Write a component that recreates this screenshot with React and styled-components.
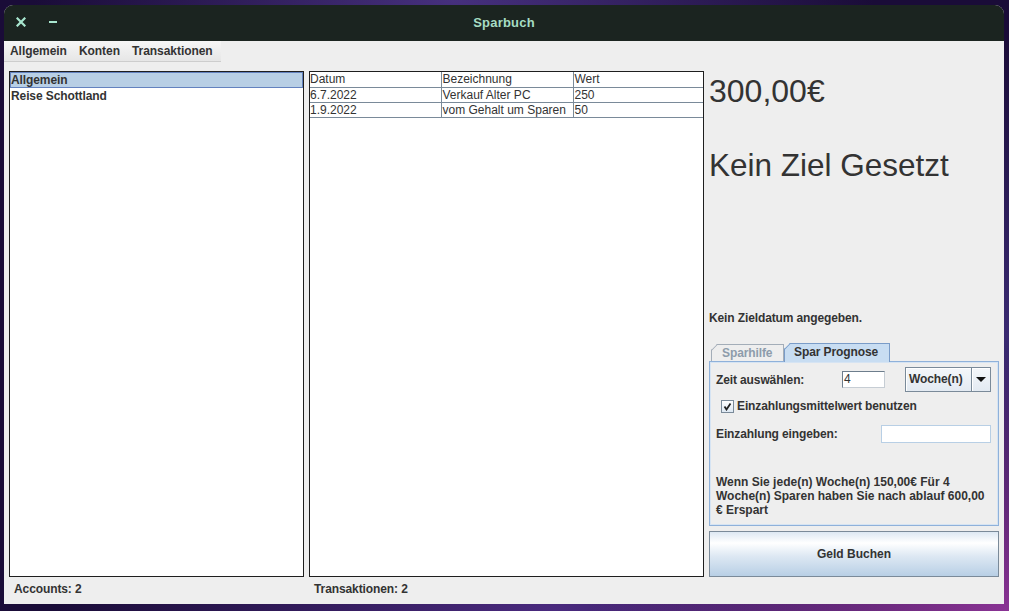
import React from "react";
import styled, { createGlobalStyle } from "styled-components";

const Global = createGlobalStyle`
  html, body { margin: 0; padding: 0; }
  body {
    font-family: "Liberation Sans", Arial, sans-serif;
    overflow: hidden;
  }
  * { box-sizing: border-box; }
`;

const Desktop = styled.div`
  width: 1009px;
  height: 611px;
  padding: 5px 5px 7px 4px;
  background:
    radial-gradient(ellipse 420px 260px at 100% 100%, #8a3394 0%, rgba(138,51,148,0) 100%),
    radial-gradient(ellipse 500px 200px at 55% 100%, #4a2a7e 0%, rgba(74,42,126,0) 100%),
    radial-gradient(ellipse 420px 160px at 45% 0%, #46307e 0%, rgba(70,48,126,0) 100%),
    radial-gradient(ellipse 200px 300px at 100% 55%, #3a2a72 0%, rgba(58,42,114,0) 100%),
    #1a0c38;
`;

const Window = styled.div`
  width: 1000px;
  height: 599px;
  display: flex;
  flex-direction: column;
  border-radius: 9px 9px 0 0;
  overflow: hidden;
  background: #eeeeee;
`;

const TitleBar = styled.div`
  height: 36px;
  flex: none;
  padding-bottom: 2px;
  background: #1b2420;
  display: grid;
  grid-template-columns: 1fr auto 1fr;
  align-items: center;
`;

const Controls = styled.div`
  display: flex;
  align-items: center;
  gap: 16px;
  padding-left: 9px;
`;

const Ctl = styled.span`
  width: 16px;
  height: 16px;
  display: flex;
  align-items: center;
  justify-content: center;
`;

const Title = styled.div`
  font-weight: bold;
  font-size: 13px;
  color: #a6dcc3;
  letter-spacing: 0.2px;
`;

const MenuBar = styled.div`
  flex: none;
  width: 217px;
  height: 21px;
  display: flex;
  align-items: center;
  background: linear-gradient(#f6f6f6, #e6e6e6);
  border-bottom: 1px solid #cdcdcd;
`;

const MenuItem = styled.span`
  padding: 0 6px;
  font-size: 12px;
  font-weight: bold;
  color: #333333;
  line-height: 20px;
  letter-spacing: -0.05px;
`;

const Main = styled.div`
  flex: none;
  height: 515px;
  padding: 9px 5px 0 5px;
  display: grid;
  grid-template-columns: 295px 395px 290px;
  column-gap: 5px;
`;

const ListBox = styled.div`
  background: #ffffff;
  border: 1px solid #1e1e1e;
  display: flex;
  flex-direction: column;
`;

const ListRow = styled.div`
  height: 16px;
  line-height: 14px;
  padding-left: 0;
  font-size: 12px;
  font-weight: bold;
  letter-spacing: -0.1px;
  color: #333333;
  background: ${(p) => (p.$selected ? "#b8cfe5" : "transparent")};
  border: 1px solid ${(p) => (p.$selected ? "#6382bf" : "transparent")};
`;

const TableBox = styled.div`
  background: #ffffff;
  border: 1px solid #1e1e1e;
`;

const Table = styled.table`
  border-collapse: collapse;
  width: 100%;
  table-layout: fixed;
`;

const Td = styled.td`
  height: 15px;
  padding: 0 1px;
  font-size: 12px;
  line-height: 14px;
  color: #333333;
  border-right: 1px solid #7a8a99;
  border-bottom: 1px solid #7a8a99;
  white-space: nowrap;
  overflow: hidden;
  &:first-child { padding-left: 0; }
  &:last-child { border-right: none; }
`;

const Right = styled.div`
  display: flex;
  flex-direction: column;
`;

const BigText = styled.div`
  font-size: ${(p) => p.$size}px;
  line-height: 36px;
  color: #333333;
  margin-top: ${(p) => p.$mt}px;
  white-space: nowrap;
`;

const Spacer = styled.div`
  flex: 1;
`;

const Note = styled.div`
  font-size: 12px;
  font-weight: bold;
  line-height: 14px;
  letter-spacing: -0.12px;
  color: #333333;
  margin-bottom: 18px;
`;

const TabStrip = styled.div`
  height: 18px;
  display: flex;
  align-items: flex-end;
  padding-left: 2px;
  position: relative;
  z-index: 1;
`;

const Tab = styled.div`
  position: relative;
  height: ${(p) => (p.$active ? 19 : 17)}px;
  margin-bottom: ${(p) => (p.$active ? -1 : 0)}px;
  width: ${(p) => p.$w}px;
  padding-left: ${(p) => p.$pl}px;
  font-size: 12px;
  font-weight: bold;
  letter-spacing: -0.1px;
  line-height: 17px;
  color: ${(p) => (p.$active ? "#333333" : "#8d9cab")};
  background: ${(p) => (p.$active ? "#c8ddf2" : "#eeeeee")};
  border-top: 1px solid ${(p) => (p.$active ? "#7a9cc8" : "#a3adb8")};
  border-right: 1px solid ${(p) => (p.$active ? "#7a9cc8" : "#a3adb8")};
  border-left: 1px solid ${(p) => (p.$active ? "#7a9cc8" : "#a3adb8")};
  clip-path: polygon(6px 0, 100% 0, 100% 100%, 0 100%, 0 6px);
  &::before {
    content: "";
    position: absolute;
    left: -1px;
    top: 5px;
    width: 9px;
    height: 1px;
    background: ${(p) => (p.$active ? "#7a9cc8" : "#a3adb8")};
    transform: rotate(-45deg);
    transform-origin: 0 0;
  }
`;

const Panel = styled.div`
  height: 165px;
  border: 1px solid #8fb1da;
  box-shadow: inset 0 0 0 1px #d6e4f3;
  padding: 5px 7px 0 6px;
  display: flex;
  flex-direction: column;
`;

const Row = styled.div`
  display: flex;
  align-items: center;
  height: ${(p) => p.$h}px;
  margin-top: ${(p) => p.$mt || 0}px;
`;

const Label = styled.span`
  font-size: 12px;
  font-weight: bold;
  letter-spacing: -0.12px;
  color: #333333;
  width: ${(p) => (p.$w ? `${p.$w}px` : "auto")};
  flex: none;
  white-space: nowrap;
`;

const Field = styled.div`
  width: ${(p) => p.$w}px;
  height: ${(p) => p.$h}px;
  background: #ffffff;
  border: 1px solid ${(p) => (p.$light ? "#b8cfe5" : "#c6cdd4")};
  border-top-color: ${(p) => (p.$light ? "#b8cfe5" : "#6d7d8c")};
  border-left-color: ${(p) => (p.$light ? "#b8cfe5" : "#6d7d8c")};
  font-size: 12px;
  line-height: 15px;
  color: #333333;
  padding-left: 1px;
`;

const Combo = styled.div`
  margin-left: ${(p) => p.$ml}px;
  width: 86px;
  height: 25px;
  border: 1px solid #7a8a99;
  display: flex;
  background: linear-gradient(#f4f7fa, #e3eaf2);
`;

const ComboText = styled.div`
  flex: 1;
  font-size: 12px;
  font-weight: bold;
  letter-spacing: -0.1px;
  color: #333333;
  line-height: 23px;
  padding-left: 3px;
  border-right: 1px solid #7a8a99;
  box-shadow: inset 1px 1px 0 #ffffff;
`;

const ComboBtn = styled.div`
  width: 18px;
  display: flex;
  align-items: center;
  justify-content: center;
  box-shadow: inset 1px 1px 0 #ffffff;
`;

const Check = styled.div`
  width: 13px;
  height: 13px;
  margin-left: 5px;
  margin-right: 3px;
  border: 1px solid #7a8a99;
  background: linear-gradient(#ffffff, #dde8f3);
  display: flex;
  align-items: center;
  justify-content: center;
`;

const Paragraph = styled.div`
  margin-top: 32px;
  font-size: 12px;
  font-weight: bold;
  line-height: 14px;
  color: #333333;
  white-space: nowrap;
`;

const Button = styled.div`
  margin-top: 5px;
  height: 46px;
  border: 1px solid #7a8a99;
  background: linear-gradient(#dde8f3 0%, #ffffff 25%, #dde8f3 55%, #b8cfe5 100%);
  display: flex;
  align-items: center;
  justify-content: center;
  font-size: 12px;
  font-weight: bold;
  color: #333333;
`;

const Status = styled.div`
  flex: 1;
  padding: 5px 5px 0 5px;
  display: grid;
  grid-template-columns: 295px 395px 290px;
  column-gap: 5px;
`;

const StatusText = styled.span`
  padding-left: 5px;
  font-size: 12px;
  font-weight: bold;
  letter-spacing: -0.1px;
  line-height: 14px;
  color: #333333;
`;

const rows = [
  ["Datum", "Bezeichnung", "Wert"],
  ["6.7.2022", "Verkauf Alter PC", "250"],
  ["1.9.2022", "vom Gehalt um Sparen", "50"],
];

export default function App() {
  return (
    <>
      <Global />
      <Desktop>
        <Window>
          <TitleBar>
            <Controls>
              <Ctl>
                <svg width="10" height="10" viewBox="0 0 10 10">
                  <path d="M1.5 1.5 L8.5 8.5 M8.5 1.5 L1.5 8.5" stroke="#a8e6cf" strokeWidth="2.2" strokeLinecap="square" />
                </svg>
              </Ctl>
              <Ctl>
                <svg width="10" height="10" viewBox="0 0 10 10">
                  <path d="M1 5 L9 5" stroke="#a8e6cf" strokeWidth="2" />
                </svg>
              </Ctl>
            </Controls>
            <Title>Sparbuch</Title>
            <div />
          </TitleBar>

          <MenuBar>
            <MenuItem>Allgemein</MenuItem>
            <MenuItem>Konten</MenuItem>
            <MenuItem>Transaktionen</MenuItem>
          </MenuBar>

          <Main>
            <ListBox>
              <ListRow $selected>Allgemein</ListRow>
              <ListRow>Reise Schottland</ListRow>
            </ListBox>

            <TableBox>
              <Table>
                <colgroup>
                  <col style={{ width: "131px" }} />
                  <col style={{ width: "132px" }} />
                  <col />
                </colgroup>
                <tbody>
                  {rows.map((r, i) => (
                    <tr key={i}>
                      {r.map((c, j) => (
                        <Td key={j}>{c}</Td>
                      ))}
                    </tr>
                  ))}
                </tbody>
              </Table>
            </TableBox>

            <Right>
              <BigText $mt={2} $size={32}>300,00€</BigText>
              <BigText $mt={38} $size={31.5}>Kein Ziel Gesetzt</BigText>
              <Spacer />
              <Note>Kein Zieldatum angegeben.</Note>
              <TabStrip>
                <Tab $w={73} $pl={10}>Sparhilfe</Tab>
                <Tab $active $w={106} $pl={9}>Spar Prognose</Tab>
              </TabStrip>
              <Panel>
                <Row $h={25}>
                  <Label $w={126}>Zeit auswählen:</Label>
                  <Field $w={43} $h={17}>4</Field>
                  <Combo $ml={20}>
                    <ComboText>Woche(n)</ComboText>
                    <ComboBtn>
                      <svg width="10" height="6" viewBox="0 0 10 6">
                        <path d="M0 0 L10 0 L5 5 Z" fill="#111" />
                      </svg>
                    </ComboBtn>
                  </Combo>
                </Row>
                <Row $h={18} $mt={5}>
                  <Check>
                    <svg width="9" height="9" viewBox="0 0 9 9">
                      <path d="M1.5 4.5 L3.5 7.5 L7.5 1.5" stroke="#222" strokeWidth="1.8" fill="none" />
                    </svg>
                  </Check>
                  <Label>Einzahlungsmittelwert benutzen</Label>
                </Row>
                <Row $h={18} $mt={10}>
                  <Label $w={165}>Einzahlung eingeben:</Label>
                  <Field $w={110} $h={18} $light />
                </Row>
                <Paragraph>
                  Wenn Sie jede(n) Woche(n) 150,00€ Für 4
                  <br />
                  Woche(n) Sparen haben Sie nach ablauf 600,00
                  <br />€ Erspart
                </Paragraph>
              </Panel>
              <Button>Geld Buchen</Button>
            </Right>
          </Main>

          <Status>
            <StatusText>Accounts: 2</StatusText>
            <StatusText>Transaktionen: 2</StatusText>
          </Status>
        </Window>
      </Desktop>
    </>
  );
}
